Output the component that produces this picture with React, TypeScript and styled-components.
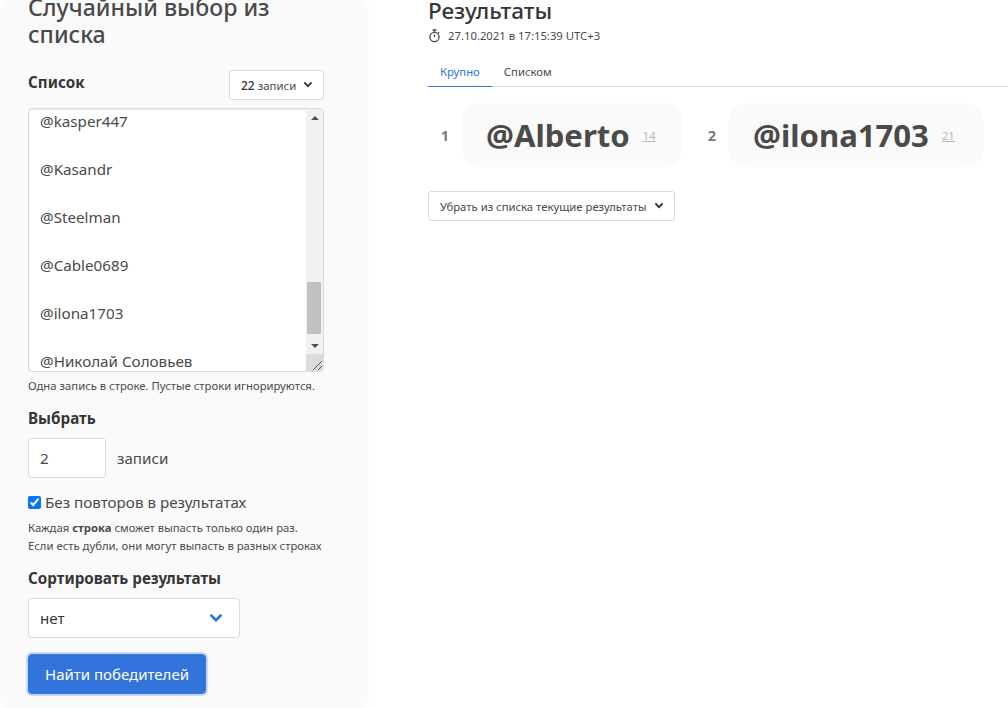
import React from "react";
import styled, { createGlobalStyle } from "styled-components";

const Global = createGlobalStyle`
  html, body { margin: 0; padding: 0; height: 100%; overflow: hidden; background: #fff; }
  body { font-family: "Noto Sans", "Open Sans", "Liberation Sans", sans-serif; color: #4a4a4a; }
  #root { height: 100%; }
  * { box-sizing: border-box; }
`;

const Page = styled.div`
  display: flex;
  height: 708px;
  overflow: hidden;
`;
const Sidebar = styled.aside`
  flex: 0 0 360px;
  margin-left: 4px;
  height: 708px;
  background: #fafafa;
  box-shadow: 0 0 10px rgba(0, 0, 0, 0.05);
  padding: 0 40px 0 24px;
  display: flex;
  flex-direction: column;
`;
const Title = styled.h1`
  margin: -6px 0 0;
  font-size: 23.1px;
  line-height: 27px;
  font-weight: 500;
  color: #4a4a4a;
`;
const ListHead = styled.div`
  display: flex;
  justify-content: space-between;
  align-items: flex-start;
  margin-top: 22px;
`;
const Label = styled.div`
  font-size: 15.2px;
  line-height: 24px;
  font-weight: 700;
  color: #363636;
`;
const SmallSelect = styled.div`
  display: flex;
  align-items: center;
  height: 30px;
  width: 95px;
  background: #fff;
  border: 1px solid #dbdbdb;
  border-radius: 3px;
  padding: 0 11px 0 11px;
  gap: 8px;
  font-size: 11.4px;
  color: #4a4a4a;
  white-space: nowrap;
`;
const Strong = styled.b`
  font-weight: 500;
  color: #363636;
  font-size: 12px;
`;
const TextArea = styled.div`
  display: flex;
  margin-top: 8px;
  height: 264px;
  background: #fff;
  border: 1px solid #dbdbdb;
  border-radius: 4px;
  box-shadow: inset 0 1px 2px rgba(10, 10, 10, 0.1);
  overflow: hidden;
`;
const Lines = styled.div`
  flex: 1;
  overflow: hidden;
  padding: 0 0 0 11px;
`;
const Entry = styled.div`
  font-size: 15.2px;
  line-height: 24px;
  margin-bottom: 24px;
  color: #4a4a4a;
  white-space: nowrap;
`;
const Scrollbar = styled.div`
  flex: 0 0 17px;
  display: flex;
  flex-direction: column;
  background: #f1f1f1;
`;
const Arrow = styled.div<{ $up?: boolean }>`
  flex: 0 0 17px;
  display: flex;
  align-items: center;
  justify-content: center;
  &::after {
    content: "";
    border-left: 4px solid transparent;
    border-right: 4px solid transparent;
    ${(p) => (p.$up ? "border-bottom: 4px solid #505050;" : "border-top: 4px solid #505050;")}
  }
`;
const Track = styled.div`
  flex: 1;
  display: flex;
  flex-direction: column;
  justify-content: flex-end;
  padding: 0 2px 3px 1px;
`;
const Thumb = styled.div`
  height: 52px;
  background: #c1c1c1;
`;
const Resizer = styled.div`
  flex: 0 0 17px;
  background: #dcdcdc;
  display: flex;
  align-items: flex-end;
  justify-content: flex-end;
`;
const Help = styled.p`
  margin: 5px 0 0;
  font-size: 11.3px;
  line-height: 18px;
  color: #4a4a4a;
`;
const SectionLabel = styled(Label)`
  margin-top: 11px;
`;
const QtyRow = styled.div`
  display: flex;
  align-items: center;
  gap: 11px;
  margin-top: 8px;
  font-size: 15.2px;
`;
const Qty = styled.div`
  width: 78px;
  height: 40px;
  background: #fff;
  border: 1px solid #dbdbdb;
  border-radius: 4px;
  padding: 0 11px;
  display: flex;
  align-items: center;
`;
const Check = styled.label`
  display: flex;
  align-items: center;
  gap: 4px;
  margin-top: 12px;
  font-size: 15.2px;
  line-height: 24px;
  input { width: 13px; height: 13px; margin: 0; accent-color: #0075ff; }
`;
const HelpBlock = styled(Help)`
  margin-top: 5px;
  b { font-weight: 700; }
`;
const SortLabel = styled(Label)`
  margin-top: 11px;
`;
const SortSelect = styled.div`
  display: flex;
  align-items: center;
  justify-content: space-between;
  width: 212px;
  height: 40px;
  margin-top: 8px;
  background: #fff;
  border: 1px solid #dbdbdb;
  border-radius: 4px;
  padding: 0 17px 0 11px;
  font-size: 15.2px;
  color: #363636;
`;
const Submit = styled.button`
  width: 178px;
  height: 40px;
  margin-top: 16px;
  background: #3273dc;
  border: 1px solid #3273dc;
  border-radius: 4px;
  box-shadow: 0 0 0 2px rgba(50, 115, 220, 0.25);
  color: #fff;
  font: inherit;
  font-size: 15px;
`;
const Main = styled.main`
  flex: 1;
  min-width: 0;
  padding-left: 64px;
`;
const Heading = styled.h2`
  margin: -4px 0 0;
  font-size: 22.5px;
  line-height: 30px;
  font-weight: 500;
  color: #363636;
`;
const Stamp = styled.div`
  display: flex;
  align-items: center;
  gap: 7px;
  margin-top: 2px;
  font-size: 11.3px;
  line-height: 16px;
  color: #4a4a4a;
`;
const Tabs = styled.div`
  display: flex;
  margin-top: 14px;
  border-bottom: 1px solid #dbdbdb;
  height: 29px;
`;
const Tab = styled.div<{ $active?: boolean }>`
  padding: 0 12px;
  margin-bottom: -1px;
  font-size: 11.3px;
  line-height: 28px;
  color: ${(p) => (p.$active ? "#3273dc" : "#4a4a4a")};
  border-bottom: 1px solid ${(p) => (p.$active ? "#3273dc" : "transparent")};
`;
const Winners = styled.div`
  display: flex;
  margin-top: 16px;
  gap: 12px;
  align-items: center;
`;
const Winner = styled.div`
  display: flex;
  align-items: center;
  gap: 12px;
`;
const Rank = styled.div`
  width: 21px;
  text-align: right;
  font-size: 14.6px;
  font-weight: 700;
  color: #7a7a7a;
`;
const Card = styled.div<{ $width: number }>`
  display: flex;
  align-items: center;
  width: ${(p) => p.$width}px;
  height: 64px;
  padding-left: 25px;
  gap: 13px;
  border-radius: 20px;
  background: #fafafa;
`;
const Name = styled.div`
  font-size: 31.1px;
  font-weight: 700;
  color: #4a4a4a;
`;
const Num = styled.u`
  font-size: 11.2px;
  color: #b5b5b5;
`;
const Remove = styled.div`
  display: inline-flex;
  align-items: center;
  gap: 8px;
  height: 30px;
  margin-top: 24px;
  padding: 0 11px;
  background: #fff;
  border: 1px solid #dbdbdb;
  border-radius: 3px;
  font-size: 11.3px;
  color: #4a4a4a;
`;

const Chevron = ({ size = 10, color = "#363636", weight = 2.6 }: { size?: number; color?: string; weight?: number }) => (
  <svg width={size} height={size * 0.7} viewBox="0 0 10 7" fill="none">
    <path d="M1.2 1.3 5 5.2l3.8-3.9" stroke={color} strokeWidth={weight} strokeLinecap="square" />
  </svg>
);

const Timer = () => (
  <svg width="13" height="14" viewBox="0 0 13 14" fill="none" stroke="#4a4a4a" strokeWidth="1.3">
    <circle cx="6.5" cy="8" r="4.6" />
    <path d="M4.6 1h3.8M6.5 1v2.4M6.5 8V5.4M10 3.2l1.1 1.1" />
  </svg>
);

const Grip = () => (
  <svg width="14" height="14" viewBox="0 0 14 14" fill="none" stroke="#555" strokeWidth="1">
    <path d="M4 13 13 4M9 13l4-4" />
  </svg>
);

const entries = ["@kasper447", "@Kasandr", "@Steelman", "@Cable0689", "@ilona1703", "@Николай Соловьев"];

export default function App() {
  return (
    <Page>
      <Global />
      <Sidebar>
        <Title>Случайный выбор из списка</Title>
        <ListHead>
          <Label>Список</Label>
          <SmallSelect>
            <span><Strong>22</Strong> записи</span>
            <Chevron size={8} weight={2.4} />
          </SmallSelect>
        </ListHead>
        <TextArea>
          <Lines>
            {entries.map((e) => (
              <Entry key={e}>{e}</Entry>
            ))}
          </Lines>
          <Scrollbar>
            <Arrow $up />
            <Track><Thumb /></Track>
            <Arrow />
            <Resizer><Grip /></Resizer>
          </Scrollbar>
        </TextArea>
        <Help>Одна запись в строке. Пустые строки игнорируются.</Help>
        <SectionLabel>Выбрать</SectionLabel>
        <QtyRow>
          <Qty>2</Qty>
          записи
        </QtyRow>
        <Check>
          <input type="checkbox" defaultChecked />
          Без повторов в результатах
        </Check>
        <HelpBlock>
          Каждая <b>строка</b> сможет выпасть только один раз.
          <br />
          Если есть дубли, они могут выпасть в разных строках
        </HelpBlock>
        <SortLabel>Сортировать результаты</SortLabel>
        <SortSelect>
          нет
          <Chevron size={12} color="#3273dc" weight={2.2} />
        </SortSelect>
        <Submit>Найти победителей</Submit>
      </Sidebar>
      <Main>
        <Heading>Результаты</Heading>
        <Stamp>
          <Timer />
          27.10.2021 в 17:15:39 UTC+3
        </Stamp>
        <Tabs>
          <Tab $active>Крупно</Tab>
          <Tab>Списком</Tab>
        </Tabs>
        <Winners>
          <Winner>
            <Rank>1</Rank>
            <Card $width={222}>
              <Name>@Alberto</Name>
              <Num>14</Num>
            </Card>
          </Winner>
          <Winner>
            <Rank>2</Rank>
            <Card $width={256}>
              <Name>@ilona1703</Name>
              <Num>21</Num>
            </Card>
          </Winner>
        </Winners>
        <Remove>
          Убрать из списка текущие результаты
          <Chevron size={8} weight={2.4} />
        </Remove>
      </Main>
    </Page>
  );
}
